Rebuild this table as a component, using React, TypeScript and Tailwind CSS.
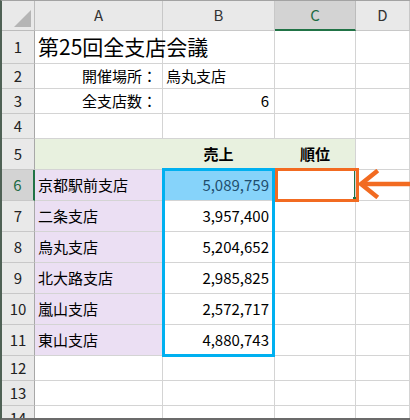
import type { ReactNode } from "react"

type Cell = {
    text?: ReactNode
    align?: "left" | "right" | "center"
    bold?: boolean
    bg?: string
    bottom?: string
    right?: string
    size?: string
    color?: string
}

type Row = {
    num: string
    h: string
    cells: Cell[]
    selected?: boolean
}

const GRAY = "border-[#d4d4d4]"
const GREEN = "border-[#8cc063]"

const empty = (n: number, extra: Partial<Cell> = {}): Cell[] => Array.from({ length: n }, () => ({ ...extra }))

const rows: Row[] = [
    {
        num: "1",
        h: "h-[33px]",
        cells: [
            { text: "第25回全支店会議", size: "text-[21px]" },
            {},
            {},
            {},
        ],
    },
    {
        num: "2",
        h: "h-[25px]",
        cells: [{ text: "開催場所：", align: "right" }, { text: "烏丸支店" }, {}, {}],
    },
    {
        num: "3",
        h: "h-[25px]",
        cells: [{ text: "全支店数：", align: "right" }, { text: "6", align: "right" }, {}, {}],
    },
    {
        num: "4",
        h: "h-[25px]",
        cells: [{ bottom: GREEN }, { bottom: GREEN }, { bottom: GREEN }, {}],
    },
    {
        num: "5",
        h: "h-[31px]",
        cells: [
            { bg: "bg-[#e8f1df]", bottom: GREEN, right: "border-r-transparent" },
            { text: "売上", align: "center", bold: true, bg: "bg-[#e8f1df]", bottom: GREEN, right: "border-r-transparent" },
            { text: "順位", align: "center", bold: true, bg: "bg-[#e8f1df]", bottom: GREEN },
            {},
        ],
    },
    {
        num: "6",
        h: "h-[31px]",
        selected: true,
        cells: [
            { text: "京都駅前支店", bg: "bg-[#ebdff3]", bottom: GREEN },
            { text: "5,089,759", align: "right", bg: "bg-[#86d3fa]", bottom: GREEN, color: "text-[#1f4e6e]" },
            { bottom: GREEN },
            {},
        ],
    },
    {
        num: "7",
        h: "h-[31px]",
        cells: [
            { text: "二条支店", bg: "bg-[#ebdff3]", bottom: GREEN },
            { text: "3,957,400", align: "right", bottom: GREEN },
            { bottom: GREEN },
            {},
        ],
    },
    {
        num: "8",
        h: "h-[31px]",
        cells: [
            { text: "烏丸支店", bg: "bg-[#ebdff3]", bottom: GREEN },
            { text: "5,204,652", align: "right", bottom: GREEN },
            { bottom: GREEN },
            {},
        ],
    },
    {
        num: "9",
        h: "h-[31px]",
        cells: [
            { text: "北大路支店", bg: "bg-[#ebdff3]", bottom: GREEN },
            { text: "2,985,825", align: "right", bottom: GREEN },
            { bottom: GREEN },
            {},
        ],
    },
    {
        num: "10",
        h: "h-[31px]",
        cells: [
            { text: "嵐山支店", bg: "bg-[#ebdff3]", bottom: GREEN },
            { text: "2,572,717", align: "right", bottom: GREEN },
            { bottom: GREEN },
            {},
        ],
    },
    {
        num: "11",
        h: "h-[31px]",
        cells: [
            { text: "東山支店", bg: "bg-[#ebdff3]", bottom: GREEN },
            { text: "4,880,743", align: "right", bottom: GREEN },
            { bottom: GREEN },
            {},
        ],
    },
    { num: "12", h: "h-[25px]", cells: empty(4) },
    { num: "13", h: "h-[25px]", cells: empty(4) },
    { num: "14", h: "h-[25px]", cells: empty(4) },
]

const widths = ["w-[128px]", "w-[112px]", "w-[81px]", "flex-1"]
const cols = ["A", "B", "C", "D"]

export default function App() {
    return (
        <div
            className="relative w-[410px] h-[420px] overflow-hidden bg-white border-l-2 border-l-[#4f6155] border-t border-t-[#a3a3a3] border-b-2 border-b-[#6b6b6b] text-black"
            style={{ fontFamily: '"Noto Sans CJK JP", "Noto Sans", sans-serif' }}
        >
            {/* Column headers */}
            <div className="flex h-[30px]">
                <div className="relative w-[33px] bg-[#e9e9e9] border-r border-b border-[#bcbcbc]">
                    <div className="absolute right-[3px] bottom-[3px] w-0 h-0 border-l-[17px] border-l-transparent border-b-[17px] border-b-[#b5b5b5]" />
                </div>
                {cols.map((c, i) => (
                    <div
                        key={c}
                        className={`${widths[i]} flex items-center justify-center text-[15px] ${
                            c === "C"
                                ? "bg-[#d3d3d3] text-[#1e6b43] border-b-2 border-b-[#217346] border-r border-r-[#bcbcbc]"
                                : "bg-[#e9e9e9] text-[#333] border-b border-r border-[#c8c8c8]"
                        }`}
                    >
                        {c}
                    </div>
                ))}
            </div>

            {/* Rows */}
            {rows.map((row) => (
                <div key={row.num} className={`flex ${row.h}`}>
                    <div
                        className={`w-[33px] flex items-center justify-center text-[15px] border-b border-[#c8c8c8] ${
                            row.selected
                                ? "bg-[#d3d3d3] text-[#1e6b43] border-r-2 border-r-[#217346]"
                                : "bg-[#e9e9e9] text-[#222] border-r border-r-[#a8a8a8]"
                        }`}
                    >
                        {row.num}
                    </div>
                    {row.cells.map((cell, i) => (
                        <div
                            key={i}
                            className={`${widths[i]} flex items-center border-b border-r ${GRAY} ${cell.bottom ?? ""} ${
                                cell.right ?? ""
                            } ${cell.bg ?? ""} ${cell.size ?? "text-[15px]"} ${cell.bold ? "font-bold" : ""} ${
                                cell.color ?? ""
                            } ${
                                cell.align === "right"
                                    ? "justify-end pr-[5px]"
                                    : cell.align === "center"
                                      ? "justify-center"
                                      : "justify-start pl-[3px]"
                            } whitespace-nowrap overflow-visible`}
                        >
                            {cell.text}
                        </div>
                    ))}
                </div>
            ))}

            {/* Blue range outline B6:B11 */}
            <div className="absolute left-[160px] top-[167px] w-[113px] h-[189px] border-[3px] border-[#00b0f0] pointer-events-none" />

            {/* Active cell C6: green edge + fill handle, then orange outline */}
            <div className="absolute left-[352px] top-[170px] w-px h-[28px] bg-[#217346]" />
            <div className="absolute left-[351px] top-[196px] w-[4px] h-[4px] bg-[#217346]" />
            <div className="absolute left-[273px] top-[167px] w-[84px] h-[34px] border-[3px] border-[#f26b21] pointer-events-none" />

            {/* Arrow */}
            <svg className="absolute left-[354px] top-[168px]" width="56" height="30" viewBox="0 0 56 30">
                <path d="M56 15 H5" stroke="#f26b21" strokeWidth="4.5" fill="none" />
                <path d="M20 3 L5 15 L20 27" stroke="#f26b21" strokeWidth="4.5" fill="none" strokeLinecap="square" />
            </svg>
        </div>
    )
}
